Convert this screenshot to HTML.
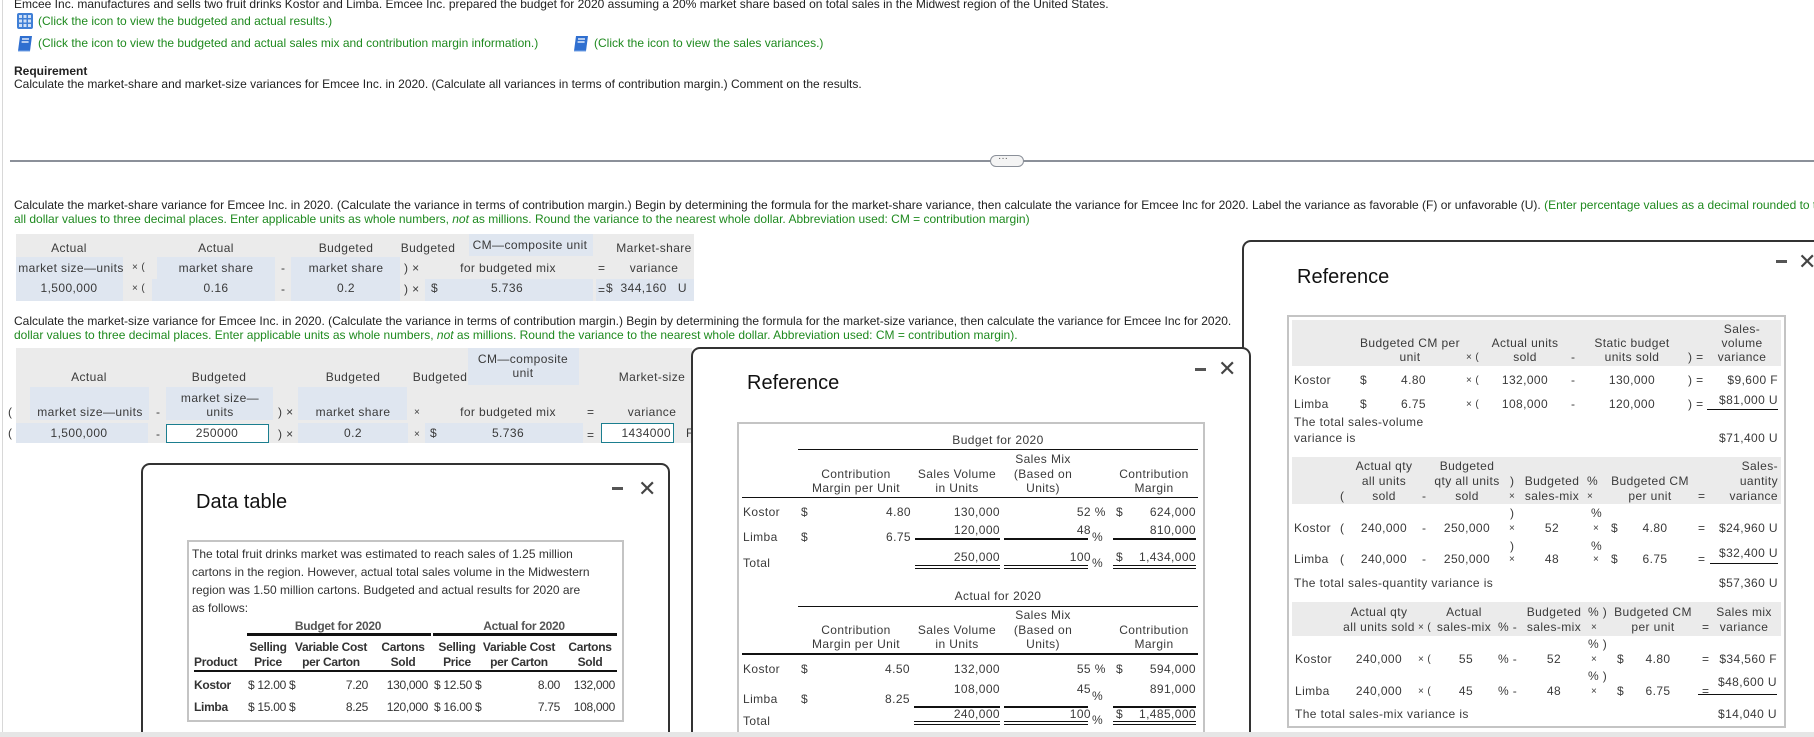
<!DOCTYPE html>
<html><head><meta charset="utf-8">
<style>
*{margin:0;padding:0;box-sizing:border-box}
html,body{width:1814px;height:737px;overflow:hidden}
body{background:#fff;position:relative;font-family:"Liberation Sans",Arial,sans-serif;font-size:12px;color:#222}
.t{position:absolute;white-space:nowrap;line-height:14px;font-size:12px}
.clip{overflow:hidden}
.c{transform:translateX(-50%);text-align:center}
.r{transform:translateX(-100%);text-align:right}
.g{color:#1f8a1f}
.box{position:absolute}
.bl{background:#dfe6f0}
.panel{position:absolute;background:#fff;border:2px solid #333;border-bottom:none;border-radius:9px 9px 0 0}
.inner{position:absolute;border:2px solid #c4c4c4;background:#fff}
.p{color:#3a3a3a;letter-spacing:0.4px}
.hl{position:absolute;background:#111}
.gbg{position:absolute;background:#ebebeb}
.dt{color:#333;font-weight:bold;letter-spacing:-0.3px}
.dn{color:#333;letter-spacing:-0.3px}
</style></head><body>

<div class="box" style="left:2px;top:0;width:1px;height:737px;background:#d8d8d8"></div>

<div class="t clip" style="left:14px;top:-3px;width:1790px">Emcee Inc. manufactures and sells two fruit drinks Kostor and Limba. Emcee Inc. prepared the budget for 2020 assuming a 20% market share based on total sales in the Midwest region of the United States.</div>

<svg class="box" style="left:17px;top:13px" width="16" height="16" viewBox="0 0 16 16"><rect x="0" y="0" width="16" height="16" rx="2" fill="#3f7fd6"/><g fill="#cfe0f7"><rect x="2" y="2" width="3" height="3"/><rect x="6.5" y="2" width="3" height="3"/><rect x="11" y="2" width="3" height="3"/><rect x="2" y="6.5" width="3" height="3"/><rect x="6.5" y="6.5" width="3" height="3"/><rect x="11" y="6.5" width="3" height="3"/><rect x="2" y="11" width="3" height="3"/><rect x="6.5" y="11" width="3" height="3"/><rect x="11" y="11" width="3" height="3"/></g></svg>
<div class="t g" style="left:38px;top:14px">(Click the icon to view the budgeted and actual results.)</div>

<svg class="box" style="left:17px;top:35px" width="16" height="17" viewBox="0 0 16 17"><path d="M3 1h12l-2 15H1z" fill="#2f6fd0"/><path d="M5 4h7M4.6 7h7" stroke="#dfeafa" stroke-width="1.4"/><path d="M1 16h12" stroke="#7aa6e6"/></svg>
<div class="t g" style="left:38px;top:36px">(Click the icon to view the budgeted and actual sales mix and contribution margin information.)</div>
<svg class="box" style="left:573px;top:35px" width="16" height="17" viewBox="0 0 16 17"><path d="M3 1h12l-2 15H1z" fill="#2f6fd0"/><path d="M5 4h7M4.6 7h7" stroke="#dfeafa" stroke-width="1.4"/><path d="M1 16h12" stroke="#7aa6e6"/></svg>
<div class="t g" style="left:594px;top:36px">(Click the icon to view the sales variances.)</div>

<div class="t" style="left:14px;top:64px;font-weight:bold">Requirement</div>
<div class="t" style="left:14px;top:77px">Calculate the market-share and market-size variances for Emcee Inc. in 2020. (Calculate all variances in terms of contribution margin.) Comment on the results.</div>

<div class="box" style="left:10px;top:160px;width:1804px;height:2px;background:#8b9099"></div>
<div class="box" style="left:990px;top:155px;width:34px;height:12px;border:1px solid #8b9099;border-radius:6px;background:#f4f4f4"></div>
<div class="t" style="left:998px;top:152px;font-size:10px;color:#555">···</div>

<div class="t clip" style="left:14px;top:198px;width:1800px">Calculate the market-share variance for Emcee Inc. in 2020. (Calculate the variance in terms of contribution margin.) Begin by determining the formula for the market-share variance, then calculate the variance for Emcee Inc for 2020. Label the variance as favorable (F) or unfavorable (U). <span class="g">(Enter percentage values as a decimal rounded to two decimal places.</span></div>
<div class="t g" style="left:14px;top:212px">all dollar values to three decimal places. Enter applicable units as whole numbers, <i>not</i> as millions. Round the variance to the nearest whole dollar. Abbreviation used: CM = contribution margin)</div>

<div class="gbg" style="left:16px;top:234px;width:678px;height:67px"></div>
<div class="box bl" style="left:469px;top:234px;width:124px;height:22px"></div>
<div class="box bl" style="left:16px;top:257px;width:107px;height:22px"></div>
<div class="box bl" style="left:157px;top:257px;width:118px;height:22px"></div>
<div class="box bl" style="left:291px;top:257px;width:109px;height:22px"></div>
<div class="box bl" style="left:16px;top:279px;width:107px;height:22px"></div>
<div class="box bl" style="left:152px;top:279px;width:123px;height:22px"></div>
<div class="box bl" style="left:291px;top:279px;width:109px;height:22px"></div>
<div class="box bl" style="left:425px;top:279px;width:168px;height:22px"></div>
<div class="box bl" style="left:596px;top:279px;width:98px;height:22px"></div>
<div class="t c p" style="left:69px;top:241px">Actual</div>
<div class="t c p" style="left:216px;top:241px">Actual</div>
<div class="t c p" style="left:346px;top:241px">Budgeted</div>
<div class="t c p" style="left:428px;top:241px">Budgeted</div>
<div class="t c p" style="left:530px;top:238px">CM—composite unit</div>
<div class="t c p" style="left:654px;top:241px">Market-share</div>
<div class="t c p" style="left:71px;top:261px">market size—units</div>
<div class="t p" style="left:132px;top:261px;font-size:10px">× (</div>
<div class="t c p" style="left:216px;top:261px">market share</div>
<div class="t p" style="left:281px;top:261px">-</div>
<div class="t c p" style="left:346px;top:261px">market share</div>
<div class="t p" style="left:404px;top:261px">) ×</div>
<div class="t c p" style="left:508px;top:261px">for budgeted mix</div>
<div class="t p" style="left:598px;top:261px">=</div>
<div class="t c p" style="left:654px;top:261px">variance</div>
<div class="t c p" style="left:69px;top:281px">1,500,000</div>
<div class="t p" style="left:132px;top:282px;font-size:10px">× (</div>
<div class="t c p" style="left:216px;top:281px">0.16</div>
<div class="t p" style="left:281px;top:282px">-</div>
<div class="t c p" style="left:346px;top:281px">0.2</div>
<div class="t p" style="left:404px;top:282px">) ×</div>
<div class="t p" style="left:431px;top:281px">$</div>
<div class="t c p" style="left:507px;top:281px">5.736</div>
<div class="t p" style="left:598px;top:283px">=</div>
<div class="t p" style="left:606px;top:281px">$&nbsp; 344,160 &nbsp; U</div>

<div class="t clip" style="left:14px;top:314px;width:1220px">Calculate the market-size variance for Emcee Inc. in 2020. (Calculate the variance in terms of contribution margin.) Begin by determining the formula for the market-size variance, then calculate the variance for Emcee Inc for 2020. Label the variance as favorable (F) or unfavorable (U).</div>
<div class="t g" style="left:14px;top:328px">dollar values to three decimal places. Enter applicable units as whole numbers, <i>not</i> as millions. Round the variance to the nearest whole dollar. Abbreviation used: CM = contribution margin).</div>

<div class="gbg" style="left:16px;top:348px;width:676px;height:95px"></div>
<div class="box bl" style="left:468px;top:348px;width:111px;height:37px"></div>
<div class="box bl" style="left:30px;top:387px;width:119px;height:33px"></div>
<div class="box bl" style="left:166px;top:387px;width:107px;height:33px"></div>
<div class="box bl" style="left:298px;top:387px;width:109px;height:33px"></div>
<div class="box bl" style="left:16px;top:423px;width:132px;height:20px"></div>
<div class="box" style="left:166px;top:424px;width:103px;height:19px;border:1px solid #1b7e8f;background:#fff"></div>
<div class="box bl" style="left:298px;top:423px;width:110px;height:20px"></div>
<div class="box bl" style="left:425px;top:423px;width:158px;height:20px"></div>
<div class="box" style="left:601px;top:423px;width:73px;height:20px;border:1px solid #1b7e8f;background:#fff"></div>
<div class="t c p" style="left:89px;top:370px">Actual</div>
<div class="t c p" style="left:219px;top:370px">Budgeted</div>
<div class="t c p" style="left:353px;top:370px">Budgeted</div>
<div class="t c p" style="left:440px;top:370px">Budgeted</div>
<div class="t c p" style="left:523px;top:352px">CM—composite</div>
<div class="t c p" style="left:523px;top:366px">unit</div>
<div class="t c p" style="left:652px;top:370px">Market-size</div>
<div class="t p" style="left:8px;top:405px">(</div>
<div class="t c p" style="left:90px;top:405px">market size—units</div>
<div class="t p" style="left:156px;top:405px">-</div>
<div class="t c p" style="left:220px;top:391px">market size—</div>
<div class="t c p" style="left:220px;top:405px">units</div>
<div class="t p" style="left:278px;top:405px">) ×</div>
<div class="t c p" style="left:353px;top:405px">market share</div>
<div class="t p" style="left:414px;top:406px;font-size:10px">×</div>
<div class="t c p" style="left:508px;top:405px">for budgeted mix</div>
<div class="t p" style="left:587px;top:405px">=</div>
<div class="t c p" style="left:652px;top:405px">variance</div>
<div class="t p" style="left:8px;top:426px">(</div>
<div class="t c p" style="left:79px;top:426px">1,500,000</div>
<div class="t p" style="left:156px;top:427px">-</div>
<div class="t c p" style="left:217px;top:426px">250000</div>
<div class="t p" style="left:278px;top:427px">) ×</div>
<div class="t c p" style="left:353px;top:426px">0.2</div>
<div class="t p" style="left:414px;top:428px;font-size:10px">×</div>
<div class="t p" style="left:430px;top:426px">$</div>
<div class="t c p" style="left:508px;top:426px">5.736</div>
<div class="t p" style="left:587px;top:428px">=</div>
<div class="t r p" style="left:671px;top:426px">1434000</div>
<div class="t p" style="left:686px;top:426px">F</div>

<!-- DATA TABLE panel -->
<div class="panel" style="left:141px;top:463px;width:529px;height:274px;z-index:2">
  <div class="t" style="left:53px;top:25px;font-size:20px;line-height:24px;color:#111">Data table</div>
  <div class="box" style="left:469px;top:22px;width:11px;height:3px;background:#555"></div>
  <div class="t" style="left:495px;top:12px;font-size:22px;line-height:24px;color:#444">✕</div>
  <div class="inner" style="left:44px;top:75px;width:437px;height:182px"></div>
</div>
<div style="position:absolute;left:0;top:0;z-index:3">
  <div class="t dn" style="left:192px;top:547px;letter-spacing:0">The total fruit drinks market was estimated to reach sales of 1.25 million</div>
  <div class="t dn" style="left:192px;top:565px;letter-spacing:0">cartons in the region. However, actual total sales volume in the Midwestern</div>
  <div class="t dn" style="left:192px;top:583px;letter-spacing:0">region was 1.50 million cartons. Budgeted and actual results for 2020 are</div>
  <div class="t dn" style="left:192px;top:601px;letter-spacing:0">as follows:</div>
  <div class="t c dt" style="left:338px;top:619px;color:#555">Budget for 2020</div>
  <div class="t c dt" style="left:524px;top:619px;color:#555">Actual for 2020</div>
  <div class="hl" style="left:247px;top:633px;width:184px;height:3px"></div>
  <div class="hl" style="left:433px;top:633px;width:184px;height:3px"></div>
  <div class="t c dt" style="left:268px;top:640px">Selling</div>
  <div class="t c dt" style="left:331px;top:640px">Variable Cost</div>
  <div class="t c dt" style="left:403px;top:640px">Cartons</div>
  <div class="t c dt" style="left:457px;top:640px">Selling</div>
  <div class="t c dt" style="left:519px;top:640px">Variable Cost</div>
  <div class="t c dt" style="left:590px;top:640px">Cartons</div>
  <div class="t dt" style="left:194px;top:655px">Product</div>
  <div class="t c dt" style="left:268px;top:655px">Price</div>
  <div class="t c dt" style="left:331px;top:655px">per Carton</div>
  <div class="t c dt" style="left:403px;top:655px">Sold</div>
  <div class="t c dt" style="left:457px;top:655px">Price</div>
  <div class="t c dt" style="left:519px;top:655px">per Carton</div>
  <div class="t c dt" style="left:590px;top:655px">Sold</div>
  <div class="hl" style="left:194px;top:670px;width:423px;height:2px"></div>
  <div class="t dt" style="left:194px;top:678px">Kostor</div>
  <div class="t dn" style="left:248px;top:678px">$ 12.00 $</div>
  <div class="t r dn" style="left:368px;top:678px">7.20</div>
  <div class="t r dn" style="left:428px;top:678px">130,000</div>
  <div class="t dn" style="left:434px;top:678px">$ 12.50 $</div>
  <div class="t r dn" style="left:560px;top:678px">8.00</div>
  <div class="t r dn" style="left:615px;top:678px">132,000</div>
  <div class="t dt" style="left:194px;top:700px">Limba</div>
  <div class="t dn" style="left:248px;top:700px">$ 15.00 $</div>
  <div class="t r dn" style="left:368px;top:700px">8.25</div>
  <div class="t r dn" style="left:428px;top:700px">120,000</div>
  <div class="t dn" style="left:434px;top:700px">$ 16.00 $</div>
  <div class="t r dn" style="left:560px;top:700px">7.75</div>
  <div class="t r dn" style="left:615px;top:700px">108,000</div>
</div>

<!-- RIGHT panel -->
<div class="panel" style="left:1242px;top:240px;width:572px;height:497px;z-index:1;border-right:none;border-radius:9px 0 0 0">
  <div class="t" style="left:53px;top:23px;font-size:20px;line-height:24px;color:#111">Reference</div>
  <div class="box" style="left:532px;top:18px;width:11px;height:3px;background:#555"></div>
  <div class="t" style="left:554px;top:8px;font-size:22px;line-height:24px;color:#444">✕</div>
  <div class="inner" style="left:43px;top:73px;width:499px;height:413px"></div>
</div>
<div style="position:absolute;left:0;top:0;z-index:1">
  <div class="gbg" style="left:1292px;top:320px;width:489px;height:46px"></div>
  <div class="gbg" style="left:1292px;top:457px;width:489px;height:47px"></div>
  <div class="gbg" style="left:1292px;top:602px;width:489px;height:34px"></div>
  <div class="t c p" style="left:1410px;top:336px">Budgeted CM per</div>
  <div class="t c p" style="left:1410px;top:350px">unit</div>
  <div class="t p" style="left:1466px;top:351px;font-size:10px">× (</div>
  <div class="t c p" style="left:1525px;top:336px">Actual units</div>
  <div class="t c p" style="left:1525px;top:350px">sold</div>
  <div class="t p" style="left:1571px;top:350px">-</div>
  <div class="t c p" style="left:1632px;top:336px">Static budget</div>
  <div class="t c p" style="left:1632px;top:350px">units sold</div>
  <div class="t p" style="left:1688px;top:350px">) =</div>
  <div class="t c p" style="left:1742px;top:322px">Sales-</div>
  <div class="t c p" style="left:1742px;top:336px">volume</div>
  <div class="t c p" style="left:1742px;top:350px">variance</div>
  <div class="t p" style="left:1294px;top:373px">Kostor</div>
  <div class="t p" style="left:1360px;top:373px">$</div>
  <div class="t r p" style="left:1426px;top:373px">4.80</div>
  <div class="t p" style="left:1466px;top:374px;font-size:10px">× (</div>
  <div class="t c p" style="left:1525px;top:373px">132,000</div>
  <div class="t p" style="left:1571px;top:373px">-</div>
  <div class="t c p" style="left:1632px;top:373px">130,000</div>
  <div class="t p" style="left:1688px;top:373px">) =</div>
  <div class="t r p" style="left:1778px;top:373px">$9,600 F</div>
  <div class="t p" style="left:1294px;top:397px">Limba</div>
  <div class="t p" style="left:1360px;top:397px">$</div>
  <div class="t r p" style="left:1426px;top:397px">6.75</div>
  <div class="t p" style="left:1466px;top:398px;font-size:10px">× (</div>
  <div class="t c p" style="left:1525px;top:397px">108,000</div>
  <div class="t p" style="left:1571px;top:397px">-</div>
  <div class="t c p" style="left:1632px;top:397px">120,000</div>
  <div class="t p" style="left:1688px;top:397px">) =</div>
  <div class="t r p" style="left:1778px;top:393px">$81,000 U</div>
  <div class="hl" style="left:1707px;top:409px;width:71px;height:1px"></div>
  <div class="t p" style="left:1294px;top:415px">The total sales-volume</div>
  <div class="t p" style="left:1294px;top:431px">variance is</div>
  <div class="t r p" style="left:1778px;top:431px">$71,400 U</div>
  <div class="t c p" style="left:1384px;top:459px">Actual qty</div>
  <div class="t c p" style="left:1384px;top:474px">all units</div>
  <div class="t c p" style="left:1384px;top:489px">sold</div>
  <div class="t p" style="left:1340px;top:489px">(</div>
  <div class="t p" style="left:1422px;top:489px">-</div>
  <div class="t c p" style="left:1467px;top:459px">Budgeted</div>
  <div class="t c p" style="left:1467px;top:474px">qty all units</div>
  <div class="t c p" style="left:1467px;top:489px">sold</div>
  <div class="t p" style="left:1510px;top:474px">)</div>
  <div class="t p" style="left:1509px;top:490px;font-size:10px">×</div>
  <div class="t c p" style="left:1552px;top:474px">Budgeted</div>
  <div class="t c p" style="left:1552px;top:489px">sales-mix</div>
  <div class="t p" style="left:1587px;top:474px">%</div>
  <div class="t p" style="left:1587px;top:490px;font-size:10px">×</div>
  <div class="t c p" style="left:1650px;top:474px">Budgeted CM</div>
  <div class="t c p" style="left:1650px;top:489px">per unit</div>
  <div class="t p" style="left:1698px;top:489px">=</div>
  <div class="t r p" style="left:1778px;top:459px">Sales-</div>
  <div class="t r p" style="left:1778px;top:474px">uantity</div>
  <div class="t r p" style="left:1778px;top:489px">variance</div>
  <div class="t p" style="left:1510px;top:506px">)</div>
  <div class="t p" style="left:1591px;top:506px">%</div>
  <div class="t p" style="left:1294px;top:521px">Kostor</div>
  <div class="t p" style="left:1340px;top:521px">(</div>
  <div class="t c p" style="left:1384px;top:521px">240,000</div>
  <div class="t p" style="left:1422px;top:521px">-</div>
  <div class="t c p" style="left:1467px;top:521px">250,000</div>
  <div class="t p" style="left:1509px;top:522px;font-size:10px">×</div>
  <div class="t c p" style="left:1552px;top:521px">52</div>
  <div class="t p" style="left:1593px;top:522px;font-size:10px">×</div>
  <div class="t p" style="left:1611px;top:521px">$</div>
  <div class="t c p" style="left:1655px;top:521px">4.80</div>
  <div class="t p" style="left:1698px;top:521px">=</div>
  <div class="t r p" style="left:1778px;top:521px">$24,960 U</div>
  <div class="t p" style="left:1510px;top:539px">)</div>
  <div class="t p" style="left:1591px;top:539px">%</div>
  <div class="t p" style="left:1294px;top:552px">Limba</div>
  <div class="t p" style="left:1340px;top:552px">(</div>
  <div class="t c p" style="left:1384px;top:552px">240,000</div>
  <div class="t p" style="left:1422px;top:552px">-</div>
  <div class="t c p" style="left:1467px;top:552px">250,000</div>
  <div class="t p" style="left:1509px;top:553px;font-size:10px">×</div>
  <div class="t c p" style="left:1552px;top:552px">48</div>
  <div class="t p" style="left:1593px;top:553px;font-size:10px">×</div>
  <div class="t p" style="left:1611px;top:552px">$</div>
  <div class="t c p" style="left:1655px;top:552px">6.75</div>
  <div class="t p" style="left:1698px;top:552px">=</div>
  <div class="t r p" style="left:1778px;top:546px">$32,400 U</div>
  <div class="hl" style="left:1710px;top:563px;width:68px;height:1px"></div>
  <div class="t p" style="left:1294px;top:576px">The total sales-quantity variance is</div>
  <div class="t r p" style="left:1778px;top:576px">$57,360 U</div>
  <div class="t c p" style="left:1379px;top:605px">Actual qty</div>
  <div class="t c p" style="left:1379px;top:620px">all units sold</div>
  <div class="t p" style="left:1418px;top:621px;font-size:10px">× (</div>
  <div class="t c p" style="left:1464px;top:605px">Actual</div>
  <div class="t c p" style="left:1464px;top:620px">sales-mix</div>
  <div class="t p" style="left:1498px;top:620px">% -</div>
  <div class="t c p" style="left:1554px;top:605px">Budgeted</div>
  <div class="t c p" style="left:1554px;top:620px">sales-mix</div>
  <div class="t p" style="left:1588px;top:605px">% )</div>
  <div class="t p" style="left:1591px;top:621px;font-size:10px">×</div>
  <div class="t c p" style="left:1653px;top:605px">Budgeted CM</div>
  <div class="t c p" style="left:1653px;top:620px">per unit</div>
  <div class="t p" style="left:1702px;top:620px">=</div>
  <div class="t c p" style="left:1744px;top:605px">Sales mix</div>
  <div class="t c p" style="left:1744px;top:620px">variance</div>
  <div class="t p" style="left:1588px;top:637px">% )</div>
  <div class="t p" style="left:1295px;top:652px">Kostor</div>
  <div class="t c p" style="left:1379px;top:652px">240,000</div>
  <div class="t p" style="left:1418px;top:653px;font-size:10px">× (</div>
  <div class="t c p" style="left:1466px;top:652px">55</div>
  <div class="t p" style="left:1498px;top:652px">% -</div>
  <div class="t c p" style="left:1554px;top:652px">52</div>
  <div class="t p" style="left:1591px;top:653px;font-size:10px">×</div>
  <div class="t p" style="left:1617px;top:652px">$</div>
  <div class="t c p" style="left:1658px;top:652px">4.80</div>
  <div class="t p" style="left:1702px;top:652px">=</div>
  <div class="t r p" style="left:1777px;top:652px">$34,560 F</div>
  <div class="t p" style="left:1588px;top:669px">% )</div>
  <div class="t p" style="left:1295px;top:684px">Limba</div>
  <div class="t c p" style="left:1379px;top:684px">240,000</div>
  <div class="t p" style="left:1418px;top:685px;font-size:10px">× (</div>
  <div class="t c p" style="left:1466px;top:684px">45</div>
  <div class="t p" style="left:1498px;top:684px">% -</div>
  <div class="t c p" style="left:1554px;top:684px">48</div>
  <div class="t p" style="left:1591px;top:685px;font-size:10px">×</div>
  <div class="t p" style="left:1617px;top:684px">$</div>
  <div class="t c p" style="left:1658px;top:684px">6.75</div>
  <div class="t p" style="left:1702px;top:684px">=</div>
  <div class="t r p" style="left:1777px;top:675px">$48,600 U</div>
  <div class="hl" style="left:1698px;top:694px;width:79px;height:1px"></div>
  <div class="t p" style="left:1295px;top:707px">The total sales-mix variance is</div>
  <div class="t r p" style="left:1777px;top:707px">$14,040 U</div>
</div>

<!-- MIDDLE panel -->
<div class="panel" style="left:691px;top:347px;width:560px;height:390px;z-index:4">
  <div class="t" style="left:54px;top:22px;font-size:20px;line-height:24px;color:#111">Reference</div>
  <div class="box" style="left:502px;top:19px;width:11px;height:3px;background:#555"></div>
  <div class="t" style="left:525px;top:8px;font-size:22px;line-height:24px;color:#444">✕</div>
  <div class="inner" style="left:44px;top:73px;width:468px;height:330px"></div>
</div>
<div style="position:absolute;left:0;top:0;z-index:5">
  <div class="t c p" style="left:998px;top:433px">Budget for 2020</div>
  <div class="hl" style="left:798px;top:449px;width:400px;height:1px"></div>
  <div class="t c p" style="left:1043px;top:452px">Sales Mix</div>
  <div class="t c p" style="left:856px;top:467px">Contribution</div>
  <div class="t c p" style="left:957px;top:467px">Sales Volume</div>
  <div class="t c p" style="left:1043px;top:467px">(Based on</div>
  <div class="t c p" style="left:1154px;top:467px">Contribution</div>
  <div class="t c p" style="left:856px;top:481px">Margin per Unit</div>
  <div class="t c p" style="left:957px;top:481px">in Units</div>
  <div class="t c p" style="left:1043px;top:481px">Units)</div>
  <div class="t c p" style="left:1154px;top:481px">Margin</div>
  <div class="hl" style="left:742px;top:497px;width:456px;height:1px"></div>
  <div class="t p" style="left:743px;top:505px">Kostor</div>
  <div class="t p" style="left:801px;top:505px">$</div>
  <div class="t r p" style="left:911px;top:505px">4.80</div>
  <div class="t r p" style="left:1000px;top:505px">130,000</div>
  <div class="t r p" style="left:1091px;top:505px">52</div>
  <div class="t p" style="left:1091px;top:505px">&nbsp;%</div>
  <div class="t p" style="left:1116px;top:505px">$</div>
  <div class="t r p" style="left:1196px;top:505px">624,000</div>
  <div class="t p" style="left:743px;top:530px">Limba</div>
  <div class="t p" style="left:801px;top:530px">$</div>
  <div class="t r p" style="left:911px;top:530px">6.75</div>
  <div class="t r p" style="left:1000px;top:523px">120,000</div>
  <div class="t r p" style="left:1091px;top:523px">48</div>
  <div class="t p" style="left:1092px;top:530px">%</div>
  <div class="t r p" style="left:1196px;top:523px">810,000</div>
  <div class="hl" style="left:915px;top:538px;width:85px;height:2px"></div>
  <div class="hl" style="left:1004px;top:538px;width:84px;height:2px"></div>
  <div class="hl" style="left:1113px;top:538px;width:83px;height:2px"></div>
  <div class="t p" style="left:743px;top:556px">Total</div>
  <div class="t r p" style="left:1000px;top:550px">250,000</div>
  <div class="t r p" style="left:1091px;top:550px">100</div>
  <div class="t p" style="left:1092px;top:556px">%</div>
  <div class="t p" style="left:1116px;top:550px">$</div>
  <div class="t r p" style="left:1196px;top:550px">1,434,000</div>
  <div class="hl" style="left:915px;top:565px;width:85px;height:1px"></div><div class="hl" style="left:915px;top:568px;width:85px;height:1px"></div>
  <div class="hl" style="left:1004px;top:565px;width:84px;height:1px"></div><div class="hl" style="left:1004px;top:568px;width:84px;height:1px"></div>
  <div class="hl" style="left:1113px;top:565px;width:83px;height:1px"></div><div class="hl" style="left:1113px;top:568px;width:83px;height:1px"></div>
  <div class="t c p" style="left:998px;top:589px">Actual for 2020</div>
  <div class="hl" style="left:798px;top:606px;width:400px;height:1px"></div>
  <div class="t c p" style="left:1043px;top:608px">Sales Mix</div>
  <div class="t c p" style="left:856px;top:623px">Contribution</div>
  <div class="t c p" style="left:957px;top:623px">Sales Volume</div>
  <div class="t c p" style="left:1043px;top:623px">(Based on</div>
  <div class="t c p" style="left:1154px;top:623px">Contribution</div>
  <div class="t c p" style="left:856px;top:637px">Margin per Unit</div>
  <div class="t c p" style="left:957px;top:637px">in Units</div>
  <div class="t c p" style="left:1043px;top:637px">Units)</div>
  <div class="t c p" style="left:1154px;top:637px">Margin</div>
  <div class="hl" style="left:742px;top:653px;width:456px;height:2px"></div>
  <div class="t p" style="left:743px;top:662px">Kostor</div>
  <div class="t p" style="left:801px;top:662px">$</div>
  <div class="t r p" style="left:910px;top:662px">4.50</div>
  <div class="t r p" style="left:1000px;top:662px">132,000</div>
  <div class="t r p" style="left:1091px;top:662px">55</div>
  <div class="t p" style="left:1091px;top:662px">&nbsp;%</div>
  <div class="t p" style="left:1116px;top:662px">$</div>
  <div class="t r p" style="left:1196px;top:662px">594,000</div>
  <div class="t p" style="left:743px;top:692px">Limba</div>
  <div class="t p" style="left:801px;top:692px">$</div>
  <div class="t r p" style="left:910px;top:692px">8.25</div>
  <div class="t r p" style="left:1000px;top:682px">108,000</div>
  <div class="t r p" style="left:1091px;top:682px">45</div>
  <div class="t p" style="left:1092px;top:689px">%</div>
  <div class="t r p" style="left:1196px;top:682px">891,000</div>
  <div class="hl" style="left:914px;top:706px;width:86px;height:2px"></div>
  <div class="hl" style="left:1004px;top:706px;width:84px;height:2px"></div>
  <div class="hl" style="left:1113px;top:706px;width:83px;height:2px"></div>
  <div class="t p" style="left:743px;top:714px">Total</div>
  <div class="t r p" style="left:1000px;top:707px">240,000</div>
  <div class="t r p" style="left:1091px;top:707px">100</div>
  <div class="t p" style="left:1092px;top:713px">%</div>
  <div class="t p" style="left:1116px;top:707px">$</div>
  <div class="t r p" style="left:1196px;top:707px">1,485,000</div>
  <div class="hl" style="left:914px;top:721px;width:86px;height:1px"></div><div class="hl" style="left:914px;top:724px;width:86px;height:1px"></div>
  <div class="hl" style="left:1004px;top:721px;width:84px;height:1px"></div><div class="hl" style="left:1004px;top:724px;width:84px;height:1px"></div>
  <div class="hl" style="left:1113px;top:721px;width:83px;height:1px"></div><div class="hl" style="left:1113px;top:724px;width:83px;height:1px"></div>
</div>

<div class="box" style="left:0;top:732px;width:1814px;height:5px;background:#e6e6e6;z-index:10"></div>
</body></html>
